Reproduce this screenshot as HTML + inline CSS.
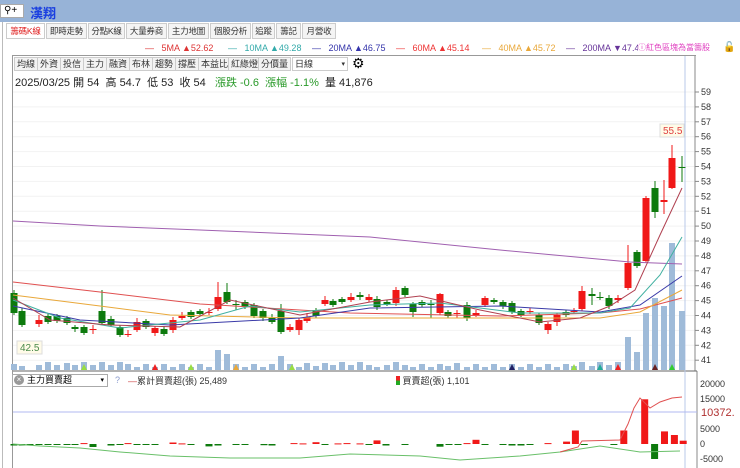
<!DOCTYPE html>
<html><head><meta charset="utf-8"><style>
*{margin:0;padding:0;box-sizing:border-box}
body{width:740px;height:468px;overflow:hidden;background:#fff;font-family:"Liberation Sans","Noto Sans CJK TC",sans-serif;position:relative}
.top{position:absolute;left:0;top:0;width:740px;height:22px;background:#97b3d7}
.t{position:absolute;white-space:nowrap}
.tab{position:absolute;top:23px;height:16px;font-size:8.5px;line-height:15px;border:1px solid #ccc;background:#f4f4f4;padding:0;text-align:center;color:#333;white-space:nowrap;letter-spacing:-0.2px}
.btn{position:absolute;top:57px;height:14px;font-size:9px;line-height:13px;border:1px solid #ccc;background:#f3f3f3;padding:0 2px;color:#333}
</style></head><body>
<div class="top"></div>
<div class="t" style="left:0;top:4px;width:24px;height:14px;background:#fff;border:1px solid #aaa;font-size:10px;line-height:12px;padding-left:3px">⚲+</div>
<div class="t" style="left:30px;top:3px;font-size:13px;font-weight:bold;color:#1a3fe0">漢翔</div>
<div style="position:absolute;left:2px;top:22px;width:1px;height:446px;background:#bbb"></div>
<div class="tab" style="left:6px;width:39px;color:#e02020;background:#fff">籌碼K線</div>
<div class="tab" style="left:46px;width:41px">即時走勢</div>
<div class="tab" style="left:88px;width:37px">分點K線</div>
<div class="tab" style="left:126px;width:41px">大量券商</div>
<div class="tab" style="left:168px;width:41px">主力地圖</div>
<div class="tab" style="left:210px;width:41px">個股分析</div>
<div class="tab" style="left:252px;width:23px">追蹤</div>
<div class="tab" style="left:276px;width:25px">籌記</div>
<div class="tab" style="left:302px;width:34px">月營收</div>
<div class="t" style="left:145px;top:43px;font-size:9px;color:#d33">—&nbsp;&nbsp;&nbsp;5MA ▲52.62</div>
<div class="t" style="left:228px;top:43px;font-size:9px;color:#3aa">—&nbsp;&nbsp;&nbsp;10MA ▲49.28</div>
<div class="t" style="left:312px;top:43px;font-size:9px;color:#33a">—&nbsp;&nbsp;&nbsp;20MA ▲46.75</div>
<div class="t" style="left:396px;top:43px;font-size:9px;color:#e33">—&nbsp;&nbsp;&nbsp;60MA ▲45.14</div>
<div class="t" style="left:482px;top:43px;font-size:9px;color:#e9a83a">—&nbsp;&nbsp;&nbsp;40MA ▲45.72</div>
<div class="t" style="left:566px;top:43px;font-size:9px;color:#639">—&nbsp;&nbsp;&nbsp;200MA ▼47.4</div>
<div class="t" style="left:638px;top:42px;font-size:8px;color:#e040c0;background:#fff">ⓘ紅色區塊為當籌股</div>
<div class="t" style="left:723px;top:42px;font-size:10px">🔓</div>
<div style="position:absolute;left:12px;top:55px;width:684px;height:1px;background:#999"></div>
<div style="position:absolute;left:12px;top:55px;width:1px;height:413px;background:#999"></div>
<div class="btn" style="left:14px">均線</div><div class="btn" style="left:37px">外資</div><div class="btn" style="left:60px">投信</div><div class="btn" style="left:83px">主力</div><div class="btn" style="left:106px">融資</div><div class="btn" style="left:129px">布林</div><div class="btn" style="left:152px">趨勢</div><div class="btn" style="left:175px">撐壓</div><div class="btn" style="left:198px">本益比</div><div class="btn" style="left:228px">紅綠燈</div><div class="btn" style="left:258px">分價量</div>
<div class="btn" style="left:292px;width:56px;background:#fff">日線<span style="float:right;font-size:7px">▾</span></div>
<div class="t" style="left:352px;top:55px;font-size:14px">⚙</div>
<div class="t" style="left:15px;top:74px;font-size:11px;color:#222">2025/03/25 開 54&nbsp; 高 54.7&nbsp; 低 53&nbsp; 收 54&nbsp; <span style="color:#2a9a2a">&nbsp;漲跌 -0.6&nbsp; 漲幅 -1.1%</span>&nbsp; 量 41,876</div>
<svg id="s" width="740" height="468" style="position:absolute;left:0;top:0" xmlns="http://www.w3.org/2000/svg" font-family="Liberation Sans" font-size="9"></svg>
<div class="t" style="left:12px;top:374px;width:96px;height:13px;border:1px solid #aaa;font-size:9px;line-height:11px;padding-left:14px;background:#fff">主力買賣超<span style="float:right;font-size:7px;padding-right:3px">▾</span></div>
<div class="t" style="left:14px;top:375px;width:10px;height:10px;border-radius:5px;background:#999;color:#fff;font-size:8px;line-height:10px;text-align:center">×</div>
<div class="t" style="left:115px;top:375px;font-size:9px;color:#89c">?</div>
<div class="t" style="left:128px;top:374px;font-size:9px;color:#333"><span style="color:#c44">—</span>累計買賣超(張) 25,489</div>
<div class="t" style="left:396px;top:374px;font-size:9px;color:#333"><span style="display:inline-block;width:4px;height:9px;background:linear-gradient(#e22 50%,#2a2 50%);vertical-align:-1px"></span> 買賣超(張) 1,101</div>
<script>
var s=document.getElementById('s'),h='';
function Y(p){return 92+(59-p)*14.9}
for(var p=41;p<=59;p++){var y=Y(p);h+='<line x1="13" x2="695" y1="'+y+'" y2="'+y+'" stroke="#f2f2f2"/><line x1="695" x2="699" y1="'+y+'" y2="'+y+'" stroke="#888"/><text x="701" y="'+(y+3)+'" fill="#333">'+p+'</text>'}
h+='<line x1="695" x2="695" y1="56" y2="371" stroke="#888"/><line x1="697" x2="697" y1="371" y2="468" stroke="#888"/><line x1="13" x2="697" y1="371" y2="371" stroke="#666"/>';
h+='<line x1="685" x2="685" y1="56" y2="468" stroke="#b8c8e8"/>';
var C=[[14,293,313,290,315,0],[22,311,325,308,327,0],[39,320,324,315,327,1],[48,316,322,314,324,0],[57,316,321,314,323,0],[67,318,323,316,325,0],[75,327,329,325,332,0],[84,327,333,325,335,0],[93,329,330,325,334,1],[102,311,323,290,325,0],[111,319,325,316,327,0],[120,327,335,325,337,0],[128,334,335,330,337,1],[137,322,330,318,332,1],[146,321,327,319,329,0],[155,328,333,326,336,1],[164,329,334,326,336,0],[173,320,330,317,333,1],[182,316,318,312,320,1],[191,312,317,310,319,0],[200,311,314,309,316,0],[209,312,313,308,315,1],[218,297,309,282,311,1],[227,292,302,283,304,0],[236,304,305,300,310,0],[245,302,307,300,309,0],[254,305,316,303,318,0],[263,311,318,309,321,0],[272,318,322,314,324,0],[281,311,332,304,334,0],[290,327,330,324,332,1],[299,320,330,318,335,1],[307,317,321,313,323,1],[316,310,316,308,318,0],[325,300,304,296,306,1],[333,301,305,299,307,0],[342,299,302,297,304,0],[351,297,300,293,302,1],[360,295,297,292,300,0],[369,297,300,294,302,1],[377,299,307,296,310,0],[387,302,304,300,306,0],[396,290,303,287,306,1],[405,288,295,286,297,0],[413,304,312,302,317,0],[422,302,305,300,307,0],[431,304,305,300,318,0],[440,294,313,293,315,1],[448,312,316,310,318,0],[457,313,314,310,318,1],[467,305,318,302,321,0],[476,313,315,310,317,1],[485,298,305,296,307,1],[494,300,302,298,304,0],[503,302,306,300,309,0],[512,303,312,301,314,0],[521,311,315,309,317,0],[530,311,312,308,314,1],[539,315,323,313,325,0],[548,324,330,322,334,1],[557,315,322,313,326,1],[566,312,315,310,317,0],[574,311,312,308,314,1],[582,291,309,286,311,1],[592,294,296,288,305,0],[600,297,298,292,300,0],[609,298,306,295,309,0],[618,298,300,295,303,1],[628,263,288,245,290,1],[637,252,266,250,268,0],[646,198,261,196,263,1],[655,188,212,181,218,0],[664,200,202,180,214,1],[672,158,188,145,189,1],[682,167,168,156,182,0]];
var V={628:337,637:352,646:313,655:298,664:306,672:243,682:311,218:350,227:354,281:356,391:352,409:358,414:349};
C.forEach(function(c){var col=c[5]?'#f01818':'#0d7a0d';var vt=V[c[0]]||(362+(c[0]*7%6));h+='<rect x="'+(c[0]-3)+'" y="'+vt+'" width="6" height="'+(370-vt)+'" fill="#9fbbd9"/>';h+='<line x1="'+c[0]+'" x2="'+c[0]+'" y1="'+c[3]+'" y2="'+c[4]+'" stroke="'+col+'"/><rect x="'+(c[0]-3.5)+'" y="'+c[1]+'" width="7" height="'+Math.max(1,c[2]-c[1])+'" fill="'+col+'"/>'});
function L(pts,col){h+='<polyline fill="none" stroke="'+col+'" stroke-width="1" points="'+pts+'"/>'}
L('13,221 100,226 200,230 370,237 500,250 630,262 682,264','#a060b0');
L('13,282 100,292 200,304 350,313 500,316 600,313 640,309 682,298','#e05050');
L('13,295 100,306 170,315 300,318 450,318 600,318 640,312 682,290','#e9a83a');
L('13,306 80,320 170,325 300,318 370,308 500,306 600,312 640,305 682,276','#3a3aa8');
L('13,300 60,318 120,328 200,320 250,306 300,312 370,305 440,303 520,313 600,313 630,308 660,275 682,237','#40b0a0');
L('13,298 50,320 110,325 180,327 230,300 300,315 370,302 420,296 480,310 540,322 580,318 610,306 635,290 660,235 682,188','#b04050');
h+='<rect x="660" y="124" width="24" height="13" fill="#fffbe8" stroke="#ddd"/><text x="663" y="134" fill="#e04040" font-size="10">55.5</text>';
h+='<rect x="17" y="341" width="25" height="13" fill="#fffbe8" stroke="#ddd"/><text x="20" y="351" fill="#4a8a4a" font-size="10">42.5</text>';
var tr=[[84,'#9d4'],[155,'#e22'],[191,'#9d4'],[236,'#e9a83a'],[292,'#9d4'],[512,'#226'],[574,'#9d4'],[600,'#2a9'],[618,'#e22'],[655,'#622'],[672,'#3c3']];
tr.forEach(function(t){h+='<polygon points="'+(t[0]-3)+',370 '+(t[0]+3)+',370 '+t[0]+',364" fill="'+t[1]+'"/>'});
function Z(v){return 444-v*0.003}
[[20000,'20000'],[15000,'15000'],[5000,'5000'],[0,'0'],[-5000,'-5000']].forEach(function(a){h+='<text x="700" y="'+(Z(a[0])+3)+'" fill="#333">'+a[1]+'</text>'});
h+='<line x1="13" x2="697" y1="412" y2="412" stroke="#b0b8f0"/><text x="701" y="416" fill="#b03030" font-size="11">10372.</text>';
var B=[[14,-500],[22,-500],[30,-500],[39,-200],[48,-300],[57,-300],[67,-300],[75,-200],[84,300],[93,-1000],[111,-500],[120,-200],[128,300],[137,-300],[146,-300],[155,-300],[173,500],[182,200],[191,-100],[209,-800],[218,-500],[236,-100],[245,-200],[264,-400],[272,-500],[294,300],[303,200],[316,600],[325,-300],[338,200],[347,300],[360,200],[369,-200],[377,1200],[386,-500],[405,-200],[440,-900],[449,-300],[458,-300],[467,300],[476,1400],[485,-300],[503,-300],[512,-500],[521,-500],[530,-300],[548,300],[566,800],[574,4500],[582,-200],[609,-200],[618,4500],[637,14900],[646,-5000],[655,4200],[664,3000],[672,1100]];
B.forEach(function(b){var x=b[0];if(x>560)x=x+(x-560)*0.1;var c=b[1]>0?'#f01818':'#0d7a0d';var y1=Z(Math.max(0,b[1])),y2=Z(Math.min(0,b[1]));h+='<rect x="'+(x-3.5)+'" y="'+y1+'" width="7" height="'+Math.max(1,y2-y1)+'" fill="'+c+'"/>'});
L('13,444 40,446 80,448 120,452 170,456 230,458 300,458 350,454 420,456 460,460 490,458 520,456 560,452 600,446 640,452 680,451','#6ac06a');
L('560,452 578,447 582,441 620,440 628,424 634,408 640,398 650,408 660,402 672,398 682,397','#e05050');
s.innerHTML=h;
</script>
</body></html>
